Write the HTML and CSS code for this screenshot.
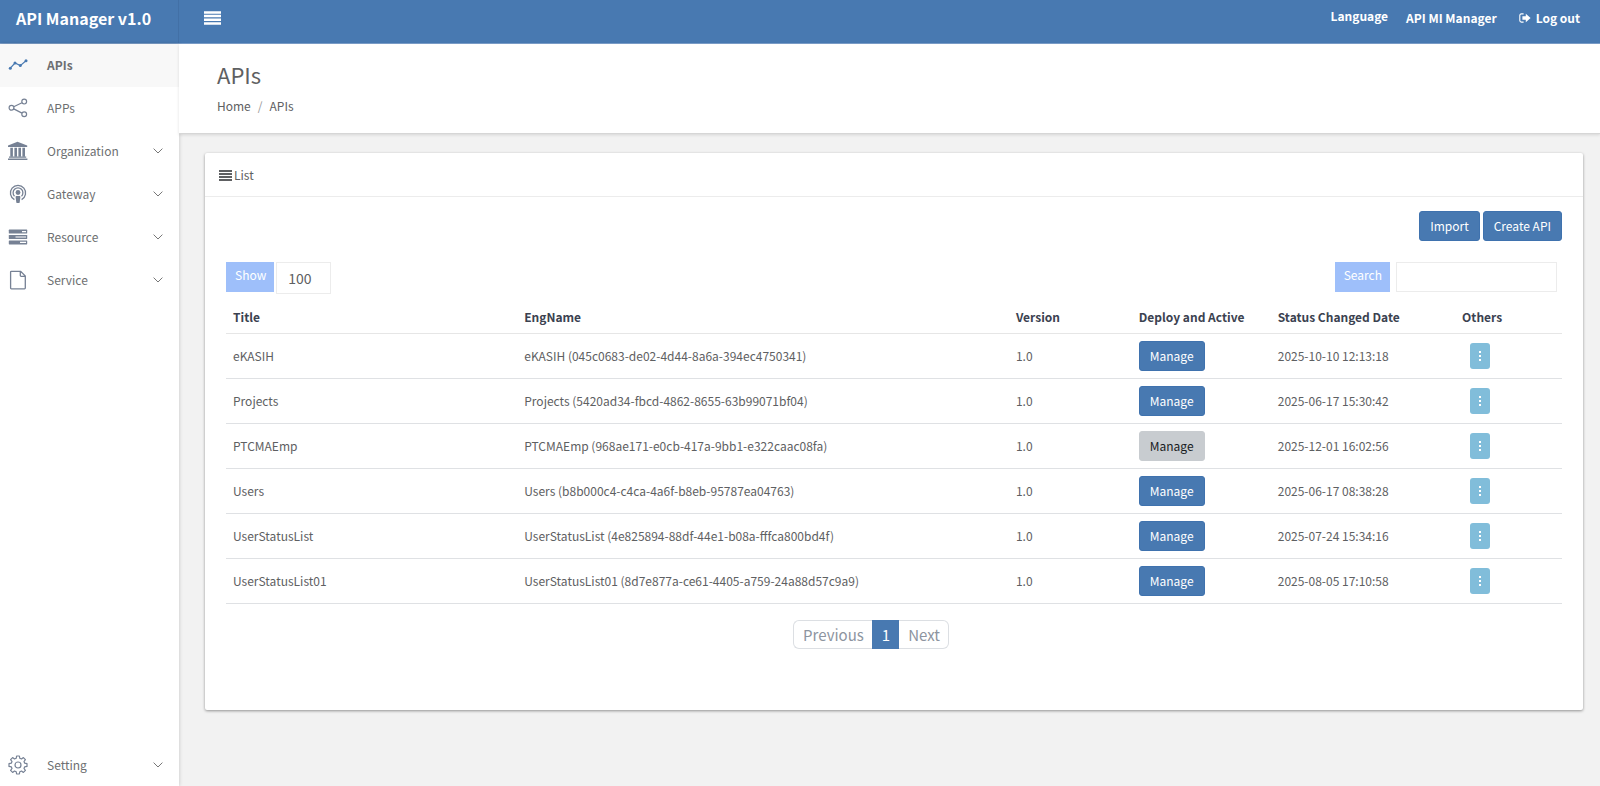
FILE: index.html
```html
<!DOCTYPE html>
<html lang="en">
<head>
<meta charset="utf-8">
<title>API Manager v1.0</title>
<link rel="stylesheet" href="styles.css">
</head>
<body>
<svg class="defs" aria-hidden="true">
  <symbol id="chevron" viewBox="0 0 10 6"><path d="M.6.6 5 5 9.4.6" fill="none" stroke="currentColor"/></symbol>
</svg>
<header class="topbar">
  <a class="brand" href="#">API Manager v1.0</a>
  <button class="menu-toggle" type="button" aria-label="Toggle menu">
    <svg width="17" height="14" viewBox="0 0 17 14"><path d="M0 1.4h17M0 5.1h17M0 8.8h17M0 12.5h17" stroke="currentColor" stroke-width="2.5"/></svg>
  </button>
  <nav class="user-nav">
    <a class="language" href="#">Language</a>
    <a href="#">API MI Manager</a>
    <a class="logout" href="#">
      <svg width="12" height="10" viewBox="0 0 12 10"><path d="M4.6.9H2.4Q.8.9.8 2.5v5q0 1.6 1.6 1.6h2.2" fill="none" stroke="currentColor" stroke-width="1.1"/><path d="M3.4 3.3h3.4V.7L11.6 5 6.8 9.3V6.7H3.4z" fill="currentColor"/></svg>
      Log out</a>
  </nav>
</header>
<div class="layout">
  <nav class="sidebar">
    <a class="nav-item active" href="#">
      <svg class="nav-icon" viewBox="0 0 20 20"><path d="M2.3 13.2 7 8l5.3 2.6L18 5.8" fill="none" stroke="currentColor" stroke-width="1.2"/><g fill="currentColor"><circle cx="2.3" cy="13.2" r="1.5"/><circle cx="7" cy="8" r="1.5"/><circle cx="12.3" cy="10.6" r="1.5"/><circle cx="18" cy="5.8" r="1.5"/></g></svg>
      <span>APIs</span>
    </a>
    <a class="nav-item" href="#">
      <svg class="nav-icon" viewBox="0 0 20 20"><g fill="none" stroke="currentColor" stroke-width="1.2"><circle cx="3.5" cy="9.8" r="2.4"/><circle cx="16.2" cy="3.6" r="2.4"/><circle cx="16.2" cy="16.2" r="2.4"/><path d="m5.7 8.7 8.3-4M5.7 10.9l8.3 4.2"/></g></svg>
      <span>APPs</span>
    </a>
    <a class="nav-item" href="#">
      <svg class="nav-icon" viewBox="0 0 20 20"><g fill="currentColor"><path d="M9.500.8 19.200 4.600V6H0V4.600z"/><path d="M2.300 6.800h2.600v9H2.300zM6.400 6.800H9v9H6.400zM10.400 6.800H13v9h-2.600zM14.400 6.800H17v9h-2.600z"/><path d="M1 15.600h17.200v1.200H1zM0 17.400h19.400v1.600H0z"/></g></svg>
      <span>Organization</span>
      <svg class="chevron"><use href="#chevron"/></svg>
    </a>
    <a class="nav-item" href="#">
      <svg class="nav-icon" viewBox="0 0 20 20"><g fill="none" stroke="currentColor" stroke-width="1.3"><path d="M6.400 15.600a7.600 7.600 0 1 1 7.200 0"/><path d="M6.500 12.200a4.900 4.900 0 1 1 7 0"/></g><circle cx="10" cy="8.500" r="2.400" fill="currentColor"/><path d="M8.300 12h3.400q.8 0 .7.900l-.7 5.300q-.1.900-1 .9H9.300q-.9 0-1-.9l-.7-5.300q-.1-.9.700-.9z" fill="currentColor"/></svg>
      <span>Gateway</span>
      <svg class="chevron"><use href="#chevron"/></svg>
    </a>
    <a class="nav-item" href="#">
      <svg class="nav-icon" viewBox="0 0 20 20"><g fill="currentColor"><rect x=".8" y="2.600" width="18.400" height="4" rx=".6"/><rect x=".8" y="8" width="18.400" height="4" rx=".6"/><rect x=".8" y="13.400" width="18.400" height="4" rx=".6"/></g><g fill="#fff"><path d="M14 4h4v1.200h-4zM7.500 9.400H18v1.200H7.500zM12 14.800h6v1.200h-6z"/></g></svg>
      <span>Resource</span>
      <svg class="chevron"><use href="#chevron"/></svg>
    </a>
    <a class="nav-item" href="#">
      <svg class="nav-icon" viewBox="0 0 20 20"><path d="M3.400 1.300h9.300l4.600 4.700v12q0 .8-.8.8H3.400q-.8 0-.8-.8V2.100q0-.8.800-.8zM12.300 1.300v4.300q0 .8.800.8h4.200" fill="none" stroke="currentColor" stroke-width="1.300"/></svg>
      <span>Service</span>
      <svg class="chevron"><use href="#chevron"/></svg>
    </a>
    <a class="nav-item setting" href="#">
      <svg class="nav-icon" viewBox="0 0 20 20"><g fill="none" stroke="currentColor" stroke-width="1.200" stroke-linejoin="round"><path d="M8.600 1h2.800l.4 2.300 1.700.7 1.900-1.400 2 2L16 6.500l.7 1.700 2.300.4v2.800l-2.300.4-.7 1.700 1.400 1.900-2 2-1.900-1.400-1.700.7-.4 2.300H8.600l-.4-2.300-1.700-.7-1.900 1.400-2-2L4 13.500l-.7-1.700L1 11.400V8.600l2.300-.4L4 6.500 2.600 4.600l2-2L6.500 4l1.700-.7z"/><circle cx="10" cy="10" r="3"/></g></svg>
      <span>Setting</span>
      <svg class="chevron"><use href="#chevron"/></svg>
    </a>
  </nav>
  <main class="main">
    <div class="page-head">
      <h1>APIs</h1>
      <div class="breadcrumb"><a href="#">Home</a><span class="sep">/</span><span>APIs</span></div>
    </div>
    <section class="card">
      <div class="card-head">
        <svg width="13" height="11" viewBox="0 0 13 11"><path d="M0 1h13M0 4h13M0 7h13M0 10h13" stroke="currentColor" stroke-width="2"/></svg>
        <h2>List</h2>
      </div>
      <div class="card-body">
        <div class="actions">
          <button class="btn" type="button">Import</button>
          <button class="btn" type="button">Create API</button>
        </div>
        <div class="filters">
          <div class="field"><label class="tag" for="show">Show</label><input class="box show" id="show" type="text" value="100"></div>
          <div class="field search-field"><label class="tag" for="search">Search</label><input class="box" id="search" type="text"></div>
        </div>
        <table class="grid">
          <colgroup><col class="c-title"><col class="c-name"><col class="c-version"><col class="c-deploy"><col class="c-date"><col class="c-others"></colgroup>
          <thead><tr><th>Title</th><th>EngName</th><th>Version</th><th>Deploy and Active</th><th>Status Changed Date</th><th>Others</th></tr></thead>
          <tbody>
            <tr><td>eKASIH</td><td>eKASIH (045c0683-de02-4d44-8a6a-394ec4750341)</td><td>1.0</td><td><button class="btn" type="button">Manage</button></td><td>2025-10-10 12:13:18</td><td><button class="more" type="button" aria-label="More"><i></i><i></i><i></i></button></td></tr>
            <tr><td>Projects</td><td>Projects (5420ad34-fbcd-4862-8655-63b99071bf04)</td><td>1.0</td><td><button class="btn" type="button">Manage</button></td><td>2025-06-17 15:30:42</td><td><button class="more" type="button" aria-label="More"><i></i><i></i><i></i></button></td></tr>
            <tr><td>PTCMAEmp</td><td>PTCMAEmp (968ae171-e0cb-417a-9bb1-e322caac08fa)</td><td>1.0</td><td><button class="btn muted" type="button">Manage</button></td><td>2025-12-01 16:02:56</td><td><button class="more" type="button" aria-label="More"><i></i><i></i><i></i></button></td></tr>
            <tr><td>Users</td><td>Users (b8b000c4-c4ca-4a6f-b8eb-95787ea04763)</td><td>1.0</td><td><button class="btn" type="button">Manage</button></td><td>2025-06-17 08:38:28</td><td><button class="more" type="button" aria-label="More"><i></i><i></i><i></i></button></td></tr>
            <tr><td>UserStatusList</td><td>UserStatusList (4e825894-88df-44e1-b08a-fffca800bd4f)</td><td>1.0</td><td><button class="btn" type="button">Manage</button></td><td>2025-07-24 15:34:16</td><td><button class="more" type="button" aria-label="More"><i></i><i></i><i></i></button></td></tr>
            <tr><td>UserStatusList01</td><td>UserStatusList01 (8d7e877a-ce61-4405-a759-24a88d57c9a9)</td><td>1.0</td><td><button class="btn" type="button">Manage</button></td><td>2025-08-05 17:10:58</td><td><button class="more" type="button" aria-label="More"><i></i><i></i><i></i></button></td></tr>
          </tbody>
        </table>
        <nav class="pager" aria-label="Pages"><a href="#">Previous</a><a class="current" href="#">1</a><a href="#">Next</a></nav>
      </div>
    </section>
  </main>
</div>
</body>
</html>
```
FILE: styles.css
```css
* { box-sizing: border-box; }
body {
  margin: 0;
  min-height: 100vh;
  display: flex;
  flex-direction: column;
  background: #f2f2f2;
  color: #5e6062;
  font: 12px/18px "Noto Sans CJK SC", "Open Sans", sans-serif;
}
a { color: inherit; text-decoration: none; }
button, input { font: inherit; color: inherit; }
.defs { position: absolute; width: 0; height: 0; }

.topbar {
  display: flex;
  height: 44px;
  padding-right: 20px;
  background: #4879b1;
  border-bottom: 1px solid #7c9fca;
  color: #fff;
  font-weight: 700;
}
.brand {
  width: 179px;
  padding: 6px 0 0 16px;
  border-right: 1px solid #4270a6;
  font-size: 16px;
  line-height: 24px;
}
.menu-toggle {
  align-self: flex-start;
  display: flex;
  margin: 11px 0 0 25px;
  padding: 0;
  border: 0;
  background: none;
  color: #fff;
}
.user-nav { display: flex; align-items: flex-start; gap: 18px; margin-left: auto; padding-top: 9px; }
.language { margin-top: -2px; }
.logout { display: flex; align-items: center; gap: 5px; margin-left: 4px; }

.layout { flex: 1; display: flex; }
.sidebar {
  width: 179px;
  display: flex;
  flex-direction: column;
  background: #fff;
  box-shadow: 0 0 4px rgba(0, 0, 0, .2);
}
.nav-item {
  display: flex;
  align-items: center;
  height: 43px;
  padding: 0 16px 2px 8px;
  color: #6d6f71;
}
.nav-item.active { background: #f8f8f8; font-weight: 700; }
.nav-icon { width: 20px; height: 20px; margin-right: 19px; color: #768194; }
.active .nav-icon { color: #4879b1; }
.chevron { width: 10px; height: 6px; margin-left: auto; color: #777; }
.setting { height: 40px; margin-top: auto; }

.main { flex: 1; min-width: 0; }
.page-head {
  height: 90px;
  padding: 16px 38px 0;
  background: #fff;
  border-bottom: 1px solid #d6d6d6;
  box-shadow: 0 1px 3px rgba(0, 0, 0, .12);
}
h1 { margin: 0; font-size: 22px; line-height: 28px; font-weight: 400; }
.breadcrumb { display: flex; gap: 7px; margin-top: 9px; }
.sep { color: #999; }

.card {
  min-height: 557px;
  margin: 19px 17px 20px 26px;
  background: #fff;
  border-radius: 2px;
  box-shadow: 0 1px 3px rgba(0, 0, 0, .4);
}
.card-head { display: flex; align-items: center; gap: 2px; height: 44px; padding: 1px 14px 0; border-bottom: 1px solid #ececec; }
h2 { margin: 0; font-size: 12px; font-weight: 400; }
.card-body { padding: 14px 21px; }
.actions { display: flex; justify-content: flex-end; gap: 3px; }
.btn {
  height: 30px;
  padding: 0 10px;
  border: 1px solid #3f72ae;
  border-radius: 3px;
  background: #4879b1;
  color: #fff;
}
.btn.muted { background: #c8ccd0; border-color: #c8ccd0; color: #181b1e; }
.filters { display: flex; justify-content: space-between; margin-top: 21px; }
.field { display: flex; align-items: flex-start; gap: 2px; }
.search-field { gap: 6px; padding-right: 5px; }
.tag { height: 30px; padding: 4px 8px 4px 9px; background: #9ebffa; color: #fff; }
.box { width: 161px; height: 30px; padding: 0 11px; border: 1px solid #ececec; background: #fff; }
.box.show { width: 55px; height: 32px; font-size: 14px; }

.grid { width: 100%; margin-top: 7px; table-layout: fixed; border-collapse: collapse; }
.c-title { width: 21.8%; }
.c-name { width: 36.8%; }
.c-version { width: 9.2%; }
.c-deploy { width: 10.4%; }
.c-date { width: 13.8%; }
.c-others { width: 8%; }
.grid th, .grid td { padding: 0 7px; text-align: left; white-space: nowrap; vertical-align: middle; }
.grid th { height: 32px; color: #3b4250; border-bottom: 1px solid #e6e6e6; }
.grid td { height: 45px; border-bottom: 1px solid #dfe1e4; }
.grid .btn { display: block; }
.more {
  display: flex;
  flex-direction: column;
  align-items: center;
  justify-content: center;
  gap: 2px;
  width: 20px;
  height: 26px;
  margin-left: 8px;
  padding: 0;
  border: 0;
  border-radius: 3px;
  background: #81bdda;
}
.more i { width: 2px; height: 2px; background: #fff; }

.pager { display: flex; justify-content: center; margin-top: 16px; padding-right: 46px; color: #8d94a0; font-size: 15px; line-height: 27px; }
.pager a { padding: 0 8px 0 9px; border: 1px solid #dcdfe3; }
.pager a:first-child { border-right: 0; border-radius: 6px 0 0 6px; }
.pager a:last-child { border-left: 0; border-radius: 0 6px 6px 0; }
.pager .current { background: #4879b1; border-color: #4879b1; color: #fff; }
```
